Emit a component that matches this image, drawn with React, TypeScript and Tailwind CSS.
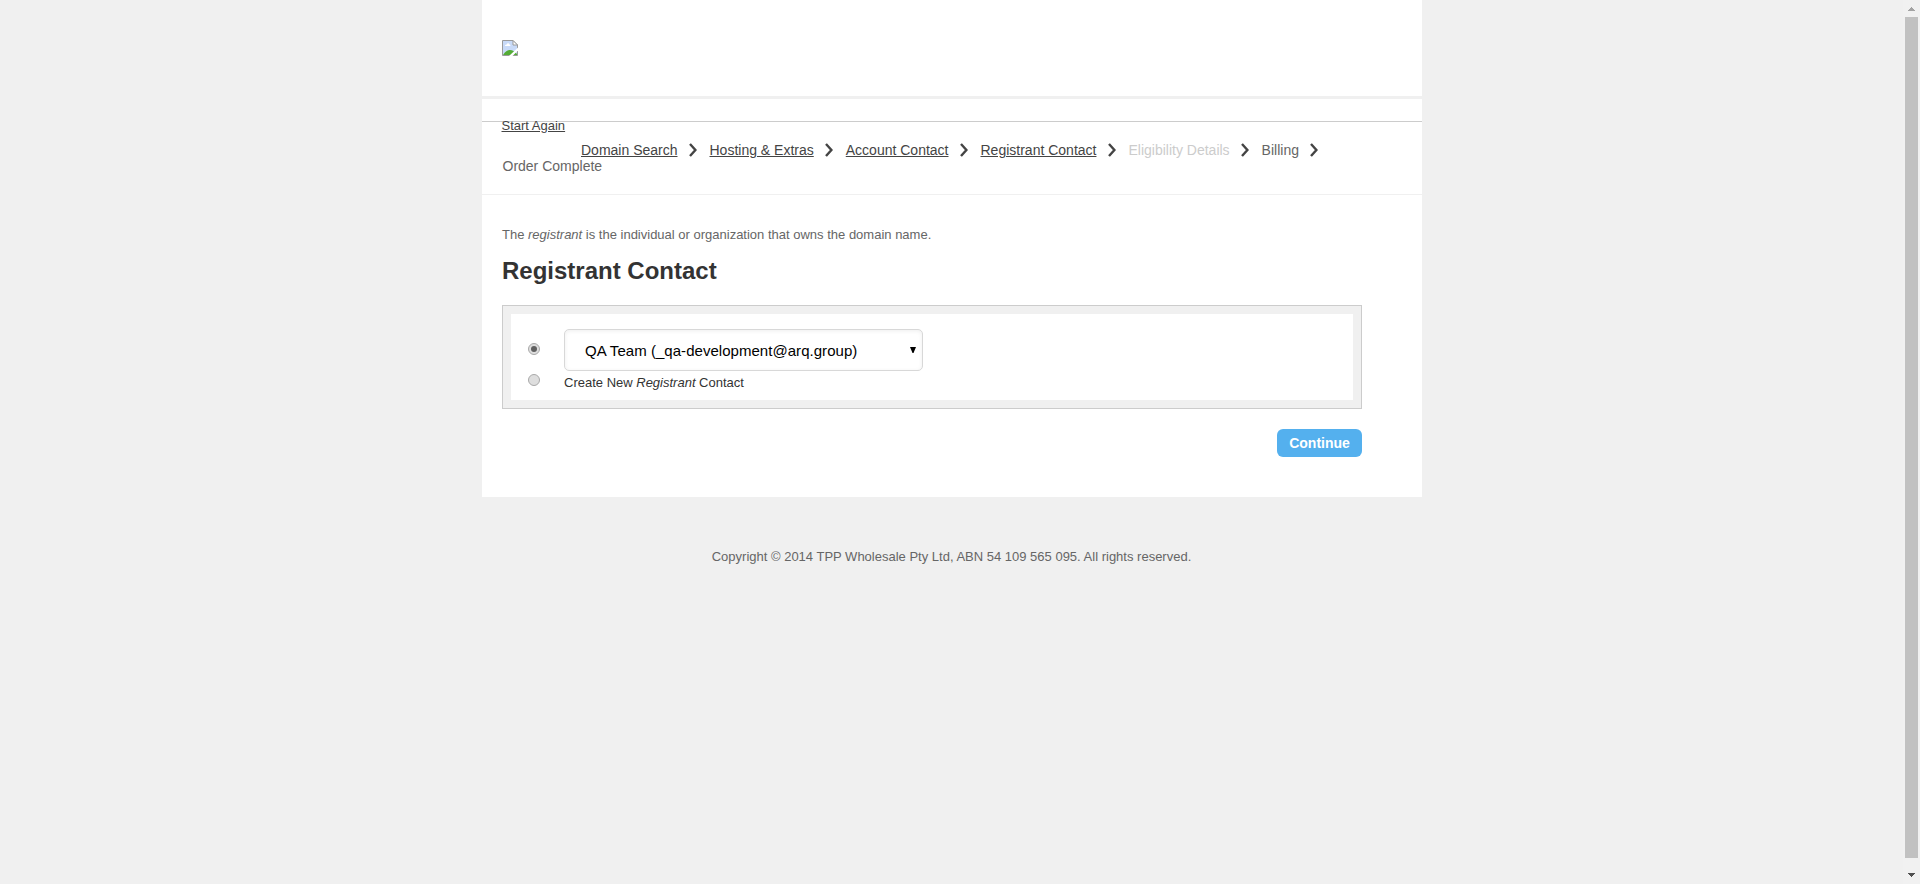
import React from "react";

const steps = [
  { label: "Domain Search", style: "text-[#444] underline" },
  { label: "Hosting & Extras", style: "text-[#444] underline" },
  { label: "Account Contact", style: "text-[#444] underline" },
  { label: "Registrant Contact", style: "text-[#444] underline" },
  { label: "Eligibility Details", style: "text-[#ccc]" },
  { label: "Billing", style: "text-[#666]" },
];

function Chevron() {
  return (
    <svg className="ml-[11.5px] mr-[12.5px] mt-px h-[14px] w-2 shrink-0" viewBox="0 0 8 14" fill="none">
      <path d="M1 1 L6.4 7 L1 13" stroke="#444" strokeWidth="2.4" />
    </svg>
  );
}

function MissingImage() {
  return (
    <svg className="h-4 w-4" viewBox="0 0 16 16">
      <path d="M0.5 0.5H11L15.5 5V15.5H0.5Z" fill="#c8daf8" stroke="#9a9a9a" />
      <path d="M3 6c0-1 1-1.600 1.800-1.400C5.200 3 7 3 7.400 4.400C8.400 4.400 8.600 5.400 8.300 6Z" fill="#fff" />
      <path d="M1 15C3 11.500 5.500 10 8 10S12.500 11.500 15 14V15Z" fill="#54ac35" />
      <path d="M11 0.500V5H15.500Z" fill="#fff" stroke="#9a9a9a" />
      <path d="M16 7.500V10.500L10.500 16H7Z" fill="#fff" />
    </svg>
  );
}

function Radio({ checked = false }: { checked?: boolean }) {
  return (
    <span
      role="radio"
      aria-checked={checked}
      className="flex h-3 w-3 items-center justify-center rounded-full border border-[#a9a9a9] bg-[#dedede]"
    >
      {checked && <span className="h-1.5 w-1.5 rounded-full bg-[#606060]" />}
    </span>
  );
}

export default function App() {
  return (
    <div className="flex h-[884px] bg-[#f0f0f0] font-['Liberation_Sans',Arial,sans-serif] text-[13px] leading-4 text-[#666]">
      <div className="flex flex-1 flex-col items-center pl-px">
        <div className="w-[940px]">
          <header className="h-24 bg-white pl-5 pt-10">
            <MissingImage />
          </header>
          <div className="mt-[3px] h-[22px] bg-white" />
          <nav className="h-[73px] border-t border-[#ccc] bg-white pl-5">
            <div className="-ml-[0.5px] -mt-1 h-6">
              <a className="text-[#444] underline">Start Again</a>
            </div>
            <div className="flex h-4 pl-[79px] text-sm leading-4">
              {steps.map((s) => (
                <React.Fragment key={s.label}>
                  <span className={"whitespace-nowrap " + s.style}>{s.label}</span>
                  <Chevron />
                </React.Fragment>
              ))}
            </div>
            <div className="pl-[0.5px] text-sm leading-4">Order Complete</div>
          </nav>
          <main className="h-[303px] border-t border-[#f0f0f0] bg-white pl-5 pr-[60px] pt-8">
            <p>
              The <em>registrant</em> is the individual or organization that owns the domain name.
            </p>
            <h1 className="mt-[14px] text-2xl font-bold leading-7 text-[#333]">Registrant Contact</h1>
            <section className="mt-5 h-[104px] border border-[#ccc] bg-[#f0f0f0] p-2">
              <div className="h-[86px] bg-white pl-[17px] pt-[15px]">
                <div className="flex h-[42px]">
                  <div className="w-9 pt-[14px]">
                    <Radio checked />
                  </div>
                  <div className="flex h-[42px] w-[359px] items-center justify-between rounded-[5px] border border-[#d8d8d8] pl-5 pr-[6px] shadow-[inset_0_1px_4px_rgba(0,0,0,0.07)]">
                    <span className="whitespace-nowrap pt-0.5 text-[15px] tracking-[0.04px] text-black">
                      QA Team (_qa-development@arq.group)
                    </span>
                    <svg className="h-[6px] w-[6px]" viewBox="0 0 6 6">
                      <path d="M0 0H6L3.5 6H2.5Z" fill="#000" />
                    </svg>
                  </div>
                </div>
                <div className="flex">
                  <div className="w-9 pt-[3px]">
                    <Radio />
                  </div>
                  <span className="pt-1 text-[#333]">
                    Create New <em>Registrant</em> Contact
                  </span>
                </div>
              </div>
            </section>
            <div className="mt-5 flex justify-end">
              <button className="h-7 w-[85px] rounded-[6px] bg-[#54b0ee] text-sm font-bold leading-4 text-white">
                Continue
              </button>
            </div>
          </main>
        </div>
        <footer className="mt-[52px] pr-px">
          Copyright © 2014 TPP Wholesale Pty Ltd, ABN 54 109 565 095. All rights reserved.
        </footer>
      </div>
      <div className="flex w-[17px] flex-col items-center justify-between bg-[#f1f1f1] pb-[7px] pt-[7px]">
        <svg className="h-1 w-[7px]" viewBox="0 0 7 4" shapeRendering="crispEdges">
          <path d="M3 0h1v1h1v1h1v1h1v1H0V3h1V2h1V1h1z" fill="#a3a3a3" />
        </svg>
        <div className="mb-[15px] mt-[6px] w-[13px] flex-1 bg-[#c1c1c1]" />
        <svg className="h-1 w-[7px]" viewBox="0 0 7 4" shapeRendering="crispEdges">
          <path d="M0 0h7v1H6v1H5v1H4v1H3V3H2V2H1V1H0z" fill="#505050" />
        </svg>
      </div>
    </div>
  );
}
